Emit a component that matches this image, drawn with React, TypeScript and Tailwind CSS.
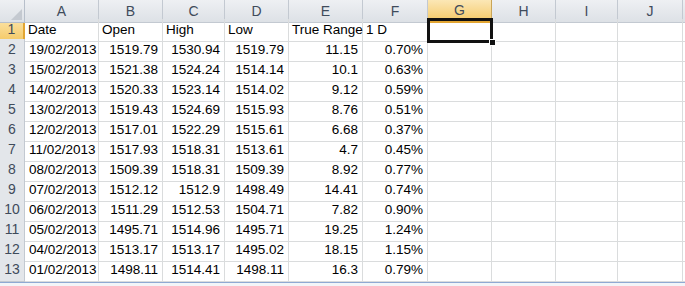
import React from "react";

const cols = ["A", "B", "C", "D", "E", "F", "G", "H", "I", "J"];

const rows: string[][] = [
  ["Date", "Open", "High", "Low", "True Range", "1 D"],
  ["19/02/2013", "1519.79", "1530.94", "1519.79", "11.15", "0.70%"],
  ["15/02/2013", "1521.38", "1524.24", "1514.14", "10.1", "0.63%"],
  ["14/02/2013", "1520.33", "1523.14", "1514.02", "9.12", "0.59%"],
  ["13/02/2013", "1519.43", "1524.69", "1515.93", "8.76", "0.51%"],
  ["12/02/2013", "1517.01", "1522.29", "1515.61", "6.68", "0.37%"],
  ["11/02/2013", "1517.93", "1518.31", "1513.61", "4.7", "0.45%"],
  ["08/02/2013", "1509.39", "1518.31", "1509.39", "8.92", "0.77%"],
  ["07/02/2013", "1512.12", "1512.9", "1498.49", "14.41", "0.74%"],
  ["06/02/2013", "1511.29", "1512.53", "1504.71", "7.82", "0.90%"],
  ["05/02/2013", "1495.71", "1514.96", "1495.71", "19.25", "1.24%"],
  ["04/02/2013", "1513.17", "1513.17", "1495.02", "18.15", "1.15%"],
  ["01/02/2013", "1498.11", "1514.41", "1498.11", "16.3", "0.79%"],
];

const gridCols =
  "grid grid-cols-[25px_74px_64px_62px_64px_74px_65px_64px_64px_62px_65px_1fr]";

export default function App() {
  return (
    <div className="w-[685px] h-[286px] overflow-hidden bg-white font-['Liberation_Sans',Arial,sans-serif] text-[13.5px] text-black">
      {/* column headers */}
      <div className={`${gridCols} h-[19px]`}>
        <div className="relative border-r border-b border-[#b7bfca] bg-gradient-to-b from-[#eef0f3] to-[#dde1e6]">
          <svg className="absolute right-[2px] bottom-[2px]" width="11" height="11" viewBox="0 0 11 11">
            <polygon points="11,0 11,11 0,11" fill="#c4c9d0" />
          </svg>
        </div>
        {cols.map((c) =>
          c === "G" ? (
            <div
              key={c}
              className="flex items-center justify-center border-r border-b-2 border-r-[#c9a557] border-b-[#e2a532] bg-gradient-to-b from-[#fbe7b5] to-[#f4c965] text-[14px] text-[#3f4b5b]"
            >
              {c}
            </div>
          ) : (
            <div
              key={c}
              className="flex items-center justify-center border-r border-b border-[#c3c9d1] bg-gradient-to-b from-[#eef0f3] to-[#dde1e6] text-[14px] text-[#3f4b5b]"
            >
              {c}
            </div>
          )
        )}
        <div className="border-b border-[#c3c9d1] bg-gradient-to-b from-[#eef0f3] to-[#dde1e6]" />
      </div>

      {rows.map((r, i) => (
        <div key={i} className={`${gridCols} h-[20px]`}>
          <div
            className={`flex items-end justify-center pb-[1px] border-r border-b text-[14px] text-[#3f4b5b] ${
              i === 0
                ? "bg-gradient-to-b from-[#fbe3a6] to-[#f4c965] border-b-[#d9b25a] border-r-[#e2a532] border-r-2"
                : "bg-[#e3e6ea] border-[#c3c9d1]"
            }`}
          >
            {i + 1}
          </div>
          {cols.map((c, j) => {
            const v = r[j] ?? "";
            const right = i > 0 && j > 0;
            const sel = i === 0 && c === "G";
            return (
              <div
                key={c}
                className={`relative flex items-end whitespace-nowrap pb-[1px] border-r border-b border-[#dadcdd] ${
                  right ? "justify-end pr-[4px]" : "justify-start pl-[3px]"
                } ${j === 0 && i > 0 ? "pl-[4px]" : ""} ${sel ? "z-10" : ""}`}
              >
                {v}
                {sel && (
                  <>
                    <div className="absolute left-[-1px] top-[-1px] right-[-2px] bottom-[-2px] border-[3px] border-solid border-[#111]" />
                    <div className="absolute right-[-5px] bottom-[-5px] w-[7px] h-[7px] bg-[#111] border border-white" />
                  </>
                )}
              </div>
            );
          })}
          <div className="border-b border-[#dadcdd]" />
        </div>
      ))}

      {/* partial next row */}
      <div className={`${gridCols} h-[2px]`}>
        <div className="bg-[#e3e6ea] border-r border-[#c3c9d1]" />
        {cols.map((c) => (
          <div key={c} className="border-r border-[#dadcdd]" />
        ))}
        <div />
      </div>
      <div className="h-[2px] bg-[#8fa9d3]" />
      <div className="h-[4px] bg-[#f3f5f8]" />
    </div>
  );
}
